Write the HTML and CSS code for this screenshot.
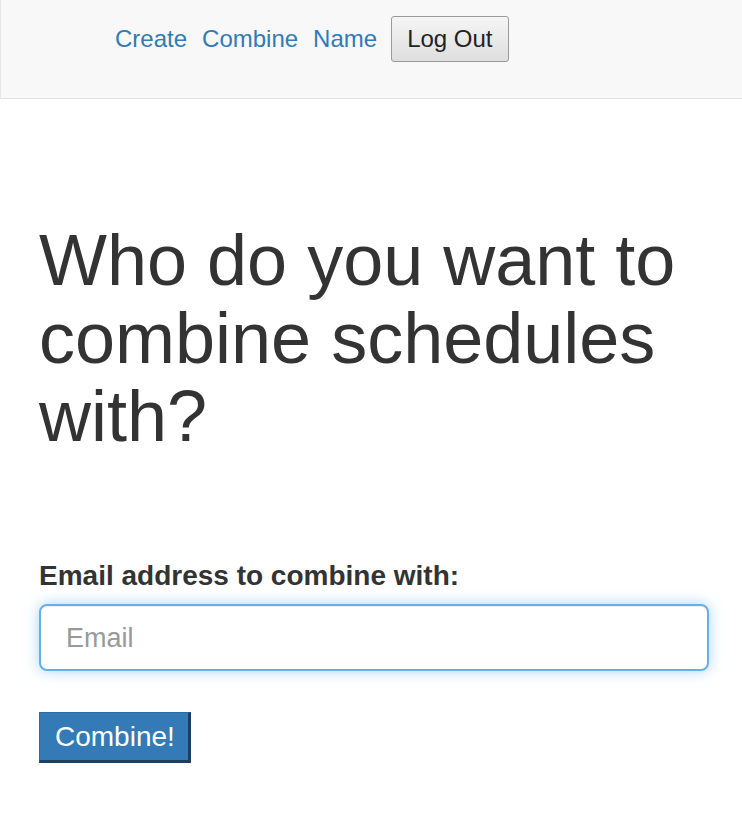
FILE: index.html
```html
<!DOCTYPE html>
<html lang="en">
<head>
<meta charset="utf-8">
<title>Combine schedules</title>
<link rel="stylesheet" href="styles.css">
</head>
<body>
<nav class="navbar">
  <div class="nav-inner">
    <a class="nav-link" href="#">Create</a>
    <a class="nav-link" href="#">Combine</a>
    <a class="nav-link" href="#">Name</a>
    <button class="logout" type="button">Log Out</button>
  </div>
</nav>
<main class="container">
  <h1 class="title">Who do you want to combine schedules with?</h1>
  <form class="combine-form">
    <label class="field-label" for="email">Email address to combine with:</label>
    <input class="field-input" id="email" type="email" placeholder="Email" autofocus>
    <button class="btn-primary" type="submit">Combine!</button>
  </form>
</main>
</body>
</html>
```
FILE: styles.css
```css
html, body {
  margin: 0;
  padding: 0;
  background: #fff;
}
body {
  font-family: "Liberation Sans", Arial, sans-serif;
  color: #333;
}
.navbar {
  height: 98px;
  background: #f8f8f8;
  border-left: 1px solid #e7e7e7;
  border-bottom: 1px solid #e2e2e2;
  box-sizing: content-box;
}
.nav-inner {
  display: flex;
  align-items: center;
  gap: 15px;
  padding: 16px 0 0 114px;
  height: 45px;
}
.nav-link {
  font-size: 24px;
  color: #337ab7;
  text-decoration: none;
}
.nav-link:last-of-type {
  margin-right: -1px;
}
.logout {
  height: 46px;
  padding: 0 15px;
  font-family: "Liberation Sans", Arial, sans-serif;
  font-size: 24px;
  color: #222;
  background: linear-gradient(#f5f5f5, #dedede);
  border: 1px solid #9a9a9a;
  border-radius: 3px;
}
.container {
  padding: 122px 33px 40px 39px;
}
.title {
  margin: 0;
  font-size: 72px;
  line-height: 78px;
  font-weight: normal;
  color: #333;
}
.combine-form {
  display: flex;
  flex-direction: column;
  align-items: flex-start;
  margin-top: 101px;
}
.field-label {
  font-size: 28px;
  line-height: 40px;
  font-weight: bold;
  color: #333;
}
.field-input {
  box-sizing: border-box;
  width: 100%;
  height: 67px;
  margin-top: 8px;
  padding: 2px 25px 0;
  font-family: "Liberation Sans", Arial, sans-serif;
  font-size: 27px;
  color: #555;
  background: #fff;
  border: 2px solid #66afe9;
  border-radius: 8px;
  outline: none;
  box-shadow: inset 0 1px 1px rgba(0,0,0,.075), 0 0 14px rgba(102,175,233,.55);
  caret-color: #333;
}
.field-input::placeholder {
  color: #999;
}
.btn-primary {
  margin-top: 41px;
  height: 51px;
  padding: 1px 13px 0 15px;
  font-family: "Liberation Sans", Arial, sans-serif;
  font-size: 28px;
  color: #fff;
  background: #337ab7;
  border-style: solid;
  border-width: 1px 3px 3px 1px;
  border-color: #2e6da4 #1d3e5f #1d3e5f #2e6da4;
  border-radius: 0;
}
```
